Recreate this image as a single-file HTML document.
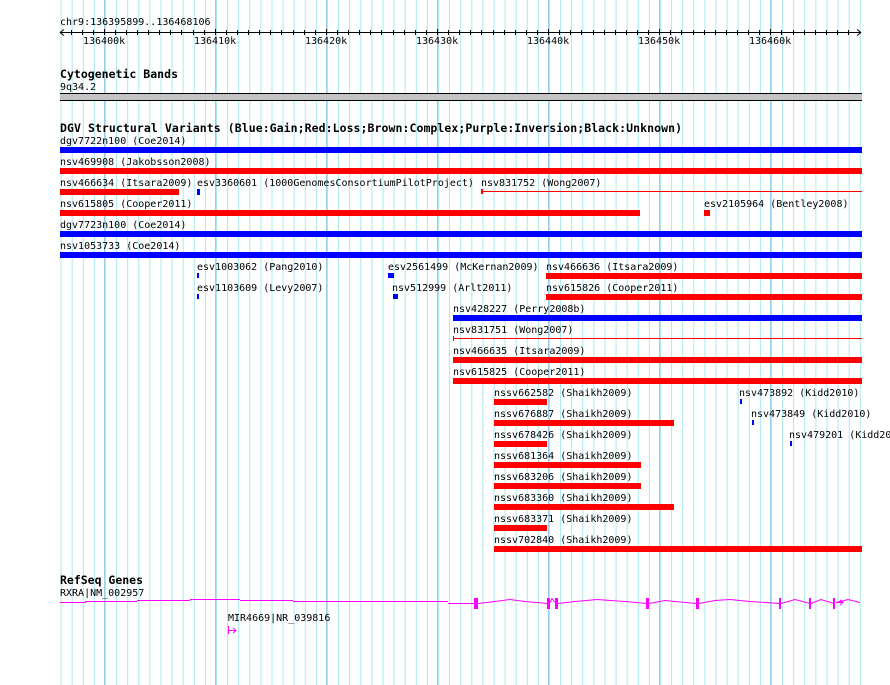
<!DOCTYPE html>
<html><head><meta charset="utf-8"><style>
html,body{margin:0;padding:0;background:#fff;}
svg{display:block;}
rect{shape-rendering:crispEdges;}
text{font-family:"DejaVu Sans Mono","Liberation Mono",monospace;font-size:10px;fill:#000;}
.b{font-weight:bold;font-size:11.5px;}
</style></head><body>
<svg width="890" height="685" viewBox="0 0 890 685" xmlns="http://www.w3.org/2000/svg">
<defs>
<pattern id="g" x="60.6" y="0" width="11.1" height="685" patternUnits="userSpaceOnUse">
<rect x="0" y="0" width="1" height="685" fill="#a8e8ee"/>
</pattern>
</defs>
<rect x="60" y="0" width="802" height="685" fill="url(#g)"/>
<g fill="#98d0ec">
<rect x="104" y="0" width="1" height="685"/><rect x="215" y="0" width="1" height="685"/>
<rect x="326" y="0" width="1" height="685"/><rect x="437" y="0" width="1" height="685"/>
<rect x="548" y="0" width="1" height="685"/><rect x="659" y="0" width="1" height="685"/>
<rect x="770" y="0" width="1" height="685"/>
</g>
<!-- ruler -->
<text x="60" y="25">chr9:136395899..136468106</text>
<line x1="60" y1="32.5" x2="861" y2="32.5" stroke="#000"/>
<path d="M60,32.5 l4,-3 M60,32.5 l4,3 M861,32.5 l-4,-3 M861,32.5 l-4,3" stroke="#000"/>
<g stroke="#000">
<path d="M71.5,30v5M82.5,30v5M93.5,30v5M104.5,29v6M115.5,30v5M126.5,30v5M137.5,30v5M148.5,30v5M159.5,30v5M170.5,30v5M181.5,30v5M193.5,30v5M204.5,30v5M215.5,29v6M226.5,30v5M237.5,30v5M248.5,30v5M259.5,30v5M270.5,30v5M281.5,30v5M293.5,30v5M304.5,30v5M315.5,30v5M326.5,29v6M337.5,30v5M348.5,30v5M359.5,30v5M370.5,30v5M381.5,30v5M393.5,30v5M404.5,30v5M415.5,30v5M426.5,30v5M437.5,29v6M448.5,30v5M459.5,30v5M470.5,30v5M481.5,30v5M493.5,30v5M504.5,30v5M515.5,30v5M526.5,30v5M537.5,30v5M548.5,29v6M559.5,30v5M570.5,30v5M581.5,30v5M593.5,30v5M604.5,30v5M615.5,30v5M626.5,30v5M637.5,30v5M648.5,30v5M659.5,29v6M670.5,30v5M681.5,30v5M693.5,30v5M704.5,30v5M715.5,30v5M726.5,30v5M737.5,30v5M748.5,30v5M759.5,30v5M770.5,29v6M781.5,30v5M793.5,30v5M804.5,30v5M815.5,30v5M826.5,30v5M837.5,30v5M848.5,30v5"/>
</g>
<text x="83" y="44">136400k</text><text x="194" y="44">136410k</text><text x="305" y="44">136420k</text>
<text x="416" y="44">136430k</text><text x="527" y="44">136440k</text><text x="638" y="44">136450k</text><text x="749" y="44">136460k</text>
<!-- cytoband -->
<text class="b" x="60" y="78" textLength="118">Cytogenetic Bands</text>
<text x="60" y="90">9q34.2</text>
<rect x="60" y="93" width="802" height="1" fill="#000"/>
<rect x="60" y="94" width="802" height="6" fill="#c4c4c4"/>
<rect x="60" y="100" width="802" height="1" fill="#000"/>
<!-- DGV -->
<text class="b" x="60" y="132" textLength="622">DGV Structural Variants (Blue:Gain;Red:Loss;Brown:Complex;Purple:Inversion;Black:Unknown)</text>
<g>
<text x="60" y="144">dgv7722n100 (Coe2014)</text><rect x="60" y="147" width="802" height="6" fill="#0000ff"/>
<text x="60" y="165">nsv469908 (Jakobsson2008)</text><rect x="60" y="168" width="802" height="6" fill="#ff0000"/>
<text x="60" y="186">nsv466634 (Itsara2009)</text><rect x="60" y="189" width="119" height="6" fill="#ff0000"/>
<text x="197" y="186">esv3360601 (1000GenomesConsortiumPilotProject)</text><rect x="197" y="189" width="3" height="6" fill="#0000ff"/>
<text x="481" y="186">nsv831752 (Wong2007)</text><rect x="481" y="189" width="2" height="5" fill="#ff0000"/><rect x="481" y="191" width="381" height="1" fill="#ff0000"/>
<text x="60" y="207">nsv615805 (Cooper2011)</text><rect x="60" y="210" width="580" height="6" fill="#ff0000"/>
<text x="704" y="207">esv2105964 (Bentley2008)</text><rect x="704" y="210" width="6" height="6" fill="#ff0000"/>
<text x="60" y="228">dgv7723n100 (Coe2014)</text><rect x="60" y="231" width="802" height="6" fill="#0000ff"/>
<text x="60" y="249">nsv1053733 (Coe2014)</text><rect x="60" y="252" width="802" height="6" fill="#0000ff"/>
<text x="197" y="270">esv1003062 (Pang2010)</text><rect x="197" y="273" width="2" height="5" fill="#0000ff"/>
<text x="388" y="270">esv2561499 (McKernan2009)</text><rect x="388" y="273" width="6" height="5" fill="#0000ff"/>
<text x="546" y="270">nsv466636 (Itsara2009)</text><rect x="546" y="273" width="316" height="6" fill="#ff0000"/>
<text x="197" y="291">esv1103609 (Levy2007)</text><rect x="197" y="294" width="2" height="5" fill="#0000ff"/>
<text x="392" y="291">nsv512999 (Arlt2011)</text><rect x="393" y="294" width="5" height="5" fill="#0000ff"/>
<text x="546" y="291">nsv615826 (Cooper2011)</text><rect x="546" y="294" width="316" height="6" fill="#ff0000"/>
<text x="453" y="312">nsv428227 (Perry2008b)</text><rect x="453" y="315" width="409" height="6" fill="#0000ff"/>
<text x="453" y="333">nsv831751 (Wong2007)</text><rect x="453" y="336" width="1" height="5" fill="#ff0000"/><rect x="453" y="338" width="409" height="1" fill="#ff0000"/>
<text x="453" y="354">nsv466635 (Itsara2009)</text><rect x="453" y="357" width="409" height="6" fill="#ff0000"/>
<text x="453" y="375">nsv615825 (Cooper2011)</text><rect x="453" y="378" width="409" height="6" fill="#ff0000"/>
<text x="494" y="396">nssv662582 (Shaikh2009)</text><rect x="494" y="399" width="53" height="6" fill="#ff0000"/>
<text x="739" y="396">nsv473892 (Kidd2010)</text><rect x="740" y="399" width="2" height="5" fill="#0000ff"/>
<text x="494" y="417">nssv676887 (Shaikh2009)</text><rect x="494" y="420" width="180" height="6" fill="#ff0000"/>
<text x="751" y="417">nsv473849 (Kidd2010)</text><rect x="752" y="420" width="2" height="5" fill="#0000ff"/>
<text x="494" y="438">nssv678426 (Shaikh2009)</text><rect x="494" y="441" width="53" height="6" fill="#ff0000"/>
<text x="789" y="438">nsv479201 (Kidd2010)</text><rect x="790" y="441" width="2" height="5" fill="#0000ff"/>
<text x="494" y="459">nssv681364 (Shaikh2009)</text><rect x="494" y="462" width="147" height="6" fill="#ff0000"/>
<text x="494" y="480">nssv683206 (Shaikh2009)</text><rect x="494" y="483" width="147" height="6" fill="#ff0000"/>
<text x="494" y="501">nssv683360 (Shaikh2009)</text><rect x="494" y="504" width="180" height="6" fill="#ff0000"/>
<text x="494" y="522">nssv683371 (Shaikh2009)</text><rect x="494" y="525" width="53" height="6" fill="#ff0000"/>
<text x="494" y="543">nssv702840 (Shaikh2009)</text><rect x="494" y="546" width="368" height="6" fill="#ff0000"/>
</g>
<!-- RefSeq -->
<text class="b" x="60" y="584" textLength="83">RefSeq Genes</text>
<text x="60" y="596">RXRA|NM_002957</text>
<g fill="#ff00ff">
<rect x="60" y="602" width="26" height="1"/><rect x="85" y="601" width="52" height="1"/>
<rect x="137" y="600" width="53" height="1"/><rect x="190" y="599" width="50" height="1"/>
<rect x="240" y="600" width="53" height="1"/><rect x="293" y="601" width="155" height="1"/>
<rect x="448" y="603" width="27" height="1"/>
</g>
<g fill="none" stroke="#ff00ff" stroke-width="1">
<path d="M478,603.5L495,601.5L510,599.5L525,601.5L548,603.5"/>
<path d="M550,602.5L552,598.5L555,602.5"/>
<path d="M557,603.5L575,601.5L597,599.5L625,601.5L647,603.5"/>
<path d="M649,603.5L665,600.5L675,601.5L697,603.5"/>
<path d="M699,603.5L715,600.5L730,599.5L750,601.5L780,603.5"/>
<path d="M781,603.5L795,599.5L810,603.5"/>
<path d="M811,603.5L821,599.5L834,603.5"/>
<path d="M836,602.5L848,599.5L860,602.5"/>
<path d="M836,602.5h7M840,600l3,2.5l-3,2.5"/>
</g>
<g fill="#ff00ff">
<rect x="474" y="598" width="4" height="11"/><rect x="547" y="598" width="3" height="11"/><rect x="555" y="598" width="3" height="11"/>
<rect x="646" y="598" width="3" height="11"/><rect x="696" y="598" width="3" height="11"/><rect x="779" y="598" width="2" height="11"/>
<rect x="809" y="598" width="2" height="11"/><rect x="833" y="598" width="2" height="11"/>
</g>
<text x="228" y="621">MIR4669|NR_039816</text>
<path d="M228.5,626v8M228,630.5h8M233,628l3,2.5l-3,2.5" stroke="#ff00ff" fill="none"/>
</svg>
</body></html>
